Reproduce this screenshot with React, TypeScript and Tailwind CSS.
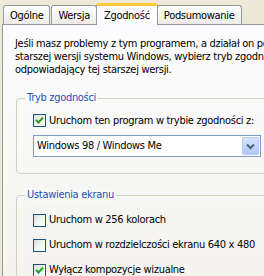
import React from "react";

const font = { fontFamily: '"DejaVu Sans Condensed", "Liberation Sans", Arial, sans-serif' };

function Check({ checked }: { checked: boolean }) {
  return (
    <div className="w-[13px] h-[13px] border border-[#1C5180] bg-gradient-to-br from-[#DCDCD7] via-[#F4F4F0] to-white flex items-center justify-center shrink-0">
      {checked && (
        <svg width="9" height="9" viewBox="0 0 9 9">
          <path d="M1 4 L3.5 6.5 L8 1.5" stroke="#21A121" strokeWidth="2" fill="none" />
        </svg>
      )}
    </div>
  );
}

function Tab({ label, active }: { label: string; active?: boolean }) {
  if (active) {
    return (
      <div className="relative z-10 -mb-px h-[22px] px-[7px] pt-[3px] bg-[#FCFCFE] border-x border-[#919B9C] rounded-t-[3px] border-t-[3px] border-t-[#FFC83C] text-black leading-[14px] -mx-[2px]">
        {label}
      </div>
    );
  }
  return (
    <div className="h-[19px] px-[6px] pt-[2px] bg-gradient-to-b from-white to-[#ECEBE6] border-x border-t border-[#919B9C] rounded-t-[3px] text-black leading-[15px]">
      {label}
    </div>
  );
}

export default function App() {
  return (
    <div className="w-[264px] h-[276px] overflow-hidden bg-[#ECE9D8] flex flex-col text-[11px] tracking-[-0.3px]" style={font}>
      <div className="h-[24px] flex items-end pl-[3px] gap-[1px] shrink-0">
        <Tab label="Ogólne" />
        <Tab label="Wersja" />
        <Tab label="Zgodność" active />
        <Tab label="Podsumowanie" />
      </div>
      <div className="flex-1 ml-[2px] border-l border-t border-[#919B9C] bg-gradient-to-b from-[#FCFCFE] to-[#F4F3EE] pl-[12px] pt-[12px] text-black whitespace-nowrap">
        <div className="leading-[13px]">
          <div>Jeśli masz problemy z tym programem, a działał on poprawnie w</div>
          <div>starszej wersji systemu Windows, wybierz tryb zgodności</div>
          <div>odpowiadający tej starszej wersji.</div>
        </div>
        <div className="relative mt-[22px] ml-[1px] -mr-[20px] h-[76px] border border-[#D0D0BF] rounded-[4px] pl-[16px] pt-[15px]">
          <div className="absolute -top-[8px] left-[8px] px-[2px] bg-[#FCFCFE] text-[#1E50B4] leading-[14px]">Tryb zgodności</div>
          <div className="flex items-center gap-[3px] h-[13px]">
            <Check checked />
            <span className="leading-[13px]">Uruchom ten program w trybie zgodności z:</span>
          </div>
          <div className="mt-[8px] w-[228px] h-[22px] border border-[#7F9DB9] bg-white flex items-center">
            <span className="flex-1 pl-[3px] leading-[14px]">Windows 98 / Windows Me</span>
            <div className="w-[17px] h-[18px] mr-[1px] rounded-[2px] border border-[#B6CAF5] bg-gradient-to-b from-[#D6E3FD] to-[#B0C8F6] flex items-center justify-center">
              <svg width="9" height="7" viewBox="0 0 9 7">
                <path d="M1 1.5 L4.5 5 L8 1.5" stroke="#4D6185" strokeWidth="2" fill="none" />
              </svg>
            </div>
          </div>
        </div>
        <div className="relative mt-[21px] ml-[1px] -mr-[20px] h-[100px] border border-[#D0D0BF] rounded-[4px] pl-[16px] pt-[18px] flex flex-col gap-[12px]">
          <div className="absolute -top-[8px] left-[8px] px-[2px] bg-[#F8F8F7] text-[#1E50B4] leading-[14px]">Ustawienia ekranu</div>
          <div className="flex items-center gap-[3px] h-[13px]">
            <Check checked={false} />
            <span>Uruchom w 256 kolorach</span>
          </div>
          <div className="flex items-center gap-[3px] h-[13px]">
            <Check checked={false} />
            <span>Uruchom w rozdzielczości ekranu 640 x 480</span>
          </div>
          <div className="flex items-center gap-[3px] h-[13px]">
            <Check checked />
            <span>Wyłącz kompozycje wizualne</span>
          </div>
        </div>
      </div>
    </div>
  );
}
